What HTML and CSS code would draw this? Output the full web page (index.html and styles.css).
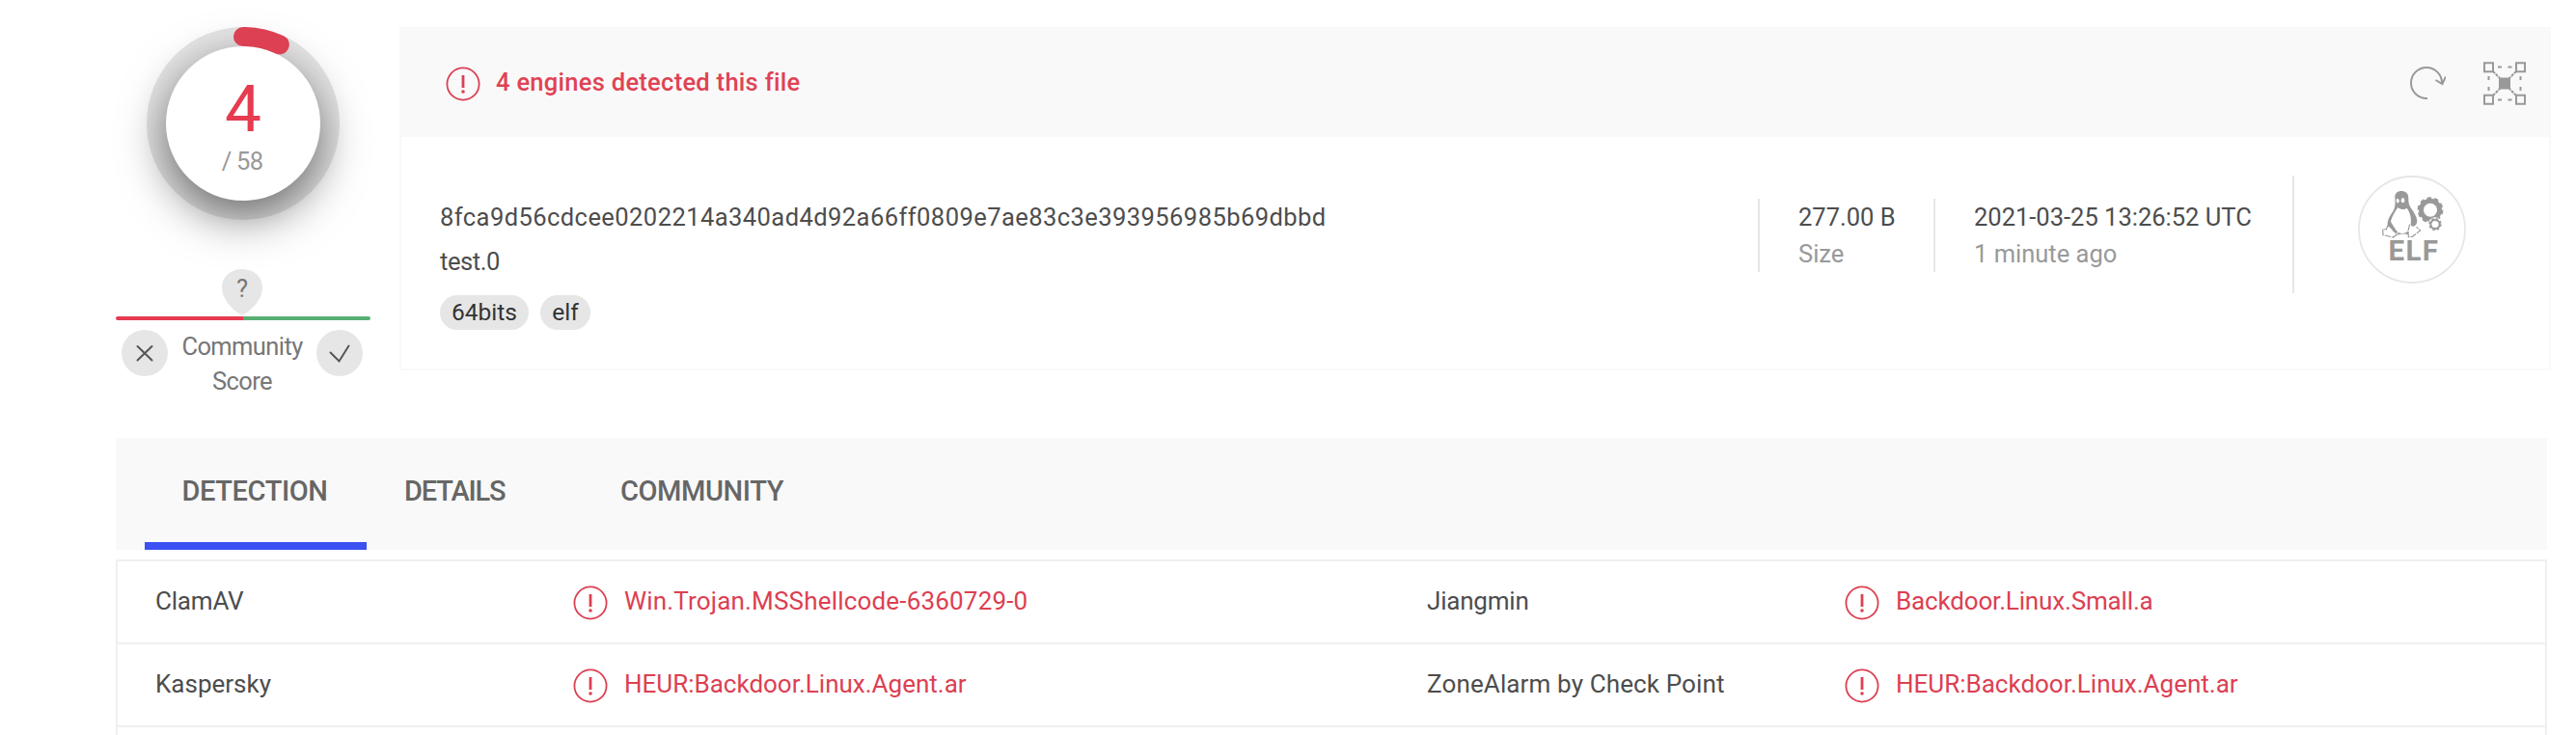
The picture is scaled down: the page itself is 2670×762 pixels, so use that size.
FILE: index.html
```html
<!DOCTYPE html>
<html lang="en">
<head>
<meta charset="utf-8">
<title>File report</title>
<link rel="stylesheet" href="styles.css">
</head>
<body>
<svg width="0" height="0" class="defs" aria-hidden="true">
  <symbol id="alert" viewBox="0 0 36 36">
    <circle cx="18" cy="18" r="16.6" fill="none" stroke="currentColor" stroke-width="1.8"/>
    <path d="M18 9v13" fill="none" stroke="currentColor" stroke-width="2.8"/>
    <circle cx="18" cy="26" r="1.8" fill="currentColor"/>
  </symbol>
</svg>

<div class="summary">
  <aside class="score">
    <div class="ring">
      <div class="ring-inner">
        <span class="positives">4</span>
        <span class="total">/ 58</span>
      </div>
      <svg class="ring-arc" viewBox="0 0 200 200" width="200" height="200">
        <path d="M100 10A90 90 0 0 1 137.8 18.3" fill="none" stroke="#dc4052" stroke-width="20" stroke-linecap="round"/>
      </svg>
    </div>
    <div class="pin">
      <svg viewBox="0 0 42 48" width="42" height="48"><path d="M21 0C33 0 42 8 42 19C42 31 32 42 21 48C10 42 0 31 0 19C0 8 9 0 21 0Z" fill="#e6e6e6"/></svg>
      <span class="pin-mark">?</span>
    </div>
    <div class="bar"></div>
    <div class="votes">
      <span class="vote"><svg viewBox="0 0 48 48" width="48" height="48"><path d="M16.5 17L31.5 31.5M31.5 17L16.5 31.5" /></svg></span>
      <span class="votes-label">Community<br>Score</span>
      <span class="vote"><svg viewBox="0 0 48 48" width="48" height="48"><path d="M14.5 23.5L23.5 32.5L33.5 16.5"/></svg></span>
    </div>
  </aside>

  <section class="card">
    <header class="card-head">
      <svg class="alert"><use href="#alert"/></svg>
      <span class="headline">4 engines detected this file</span>
      <span class="actions">
        <svg viewBox="0 0 40 40" width="40" height="40" class="line-icon"><path d="M21 36A16 16 0 1 1 36 20.5M29.5 17L36.5 21L40 13.5"/></svg>
        <svg viewBox="0 0 44 45" width="44" height="45" class="line-icon graph">
          <path d="M1 1.2h9v9h-9zM34 1.2h9v9h-9zM1 34.8h9v9h-9zM34 34.8h9v9h-9z"/>
          <path d="M15 5.5h4M25.500 5.500h4M15 39.500h4M25.500 39.500h4M5.500 15v4M5.500 26v4M38.500 15v4M38.500 26v4"/>
          <path d="M10 10l7 7M34 10l-7 7M10 35l7-7M34 35l-7-7" stroke-dasharray="3 1"/>
          <path d="M16 16.500h12v12h-12z" fill="currentColor" stroke="none"/>
        </svg>
      </span>
    </header>
    <div class="card-body">
      <div class="ident">
        <div class="hash">8fca9d56cdcee0202214a340ad4d92a66ff0809e7ae83c3e393956985b69dbbd</div>
        <div class="name">test.0</div>
        <div class="tags"><span class="tag">64bits</span><span class="tag elf">elf</span></div>
      </div>
      <div class="fact size"><div>277.00 B</div><div class="muted">Size</div></div>
      <div class="fact date"><div>2021-03-25 13:26:52 UTC</div><div class="muted">1 minute ago</div></div>
      <div class="type">
        <svg viewBox="0 0 112 112" width="112" height="112" fill="#999">
          <circle cx="56" cy="56" r="55" fill="none" stroke="#e6e6e6" stroke-width="1.8"/>
          <g transform="translate(16 8) scale(.3333)">
            <path fill-rule="evenodd" d="M67 43C67 30 76 24 88 24C101 24 109 33 109 46C109 58 110 67 116 76C126 90 135 103 136 118C136 126 131 133 124 134C119 134 115 131 116 126C119 112 115 92 104 77C98 83 85 83 76 75C68 88 58 102 54 118C56 125 60 130 64 136C69 143 72 149 77 154L65 153C57 143 51 136 44 132C42 115 52 101 61 87C69 76 68 59 67 43ZM72 49C70 55 72 61 75 62L80 58C82 53 78 46 72 49ZM87 50C84 57 88 59 94 61C99 56 98 47 92 46C89 46 88 47 87 50Z"/>
            <path d="M73 66L84 59L99 66L87 73Z"/>
            <path d="M77 152Q92 161 108 149L109 160Q94 155 74 161Z"/>
            <path d="M44 133L40 144L29 143L30 161L62 168L74 158L65 149L53 132ZM113 128L108 147L109 167L121 166L146 147L134 136" fill="none" stroke="#999" stroke-width="3.500" stroke-dasharray="20 3"/>
          </g>
          <circle cx="75" cy="35.700" r="9.500" fill="none" stroke="#999" stroke-width="5"/>
          <circle cx="75" cy="35.700" r="12" fill="none" stroke="#999" stroke-width="2.800" stroke-dasharray="4.400 3.140"/>
          <circle cx="80" cy="50.500" r="7.200" fill="#fff"/>
          <circle cx="80" cy="50.500" r="4.600" fill="none" stroke="#999" stroke-width="2"/>
          <circle cx="80" cy="50.500" r="5.900" fill="none" stroke="#999" stroke-width="1.500" stroke-dasharray="2.500 2.130"/>
          <text x="31.500" y="88" class="type-text">ELF</text>
        </svg>
      </div>
    </div>
  </section>
</div>

<nav class="tabs">
  <a class="tab active">DETECTION</a>
  <a class="tab details">DETAILS</a>
  <a class="tab community">COMMUNITY</a>
</nav>

<div class="results">
  <div class="row">
    <span class="engine clam">ClamAV</span>
    <span class="verdict"><svg class="alert"><use href="#alert"/></svg><span class="trojan">Win.Trojan.MSShellcode-6360729-0</span></span>
    <span class="engine jiang">Jiangmin</span>
    <span class="verdict"><svg class="alert"><use href="#alert"/></svg><span class="small">Backdoor.Linux.Small.a</span></span>
  </div>
  <div class="row">
    <span class="engine">Kaspersky</span>
    <span class="verdict"><svg class="alert"><use href="#alert"/></svg><span>HEUR:Backdoor.Linux.Agent.ar</span></span>
    <span class="engine zone">ZoneAlarm by Check Point</span>
    <span class="verdict"><svg class="alert"><use href="#alert"/></svg><span>HEUR:Backdoor.Linux.Agent.ar</span></span>
  </div>
</div>
</body>
</html>
```
FILE: styles.css
```css
* { box-sizing: border-box; }
html { overflow: hidden; }
body {
  margin: 0;
  height: 762px;
  padding: 28px 26px 0 120px;
  overflow: hidden;
  background: #fff;
  color: #4d4d4d;
  font: 400 25.5px/38px Roboto, "Liberation Sans", sans-serif;
}
svg { display: block; flex: none; }
.defs { position: absolute; }
.alert { width: 36px; height: 36px; margin-top: 3px; color: #dc4052; }

.summary { display: flex; align-items: flex-start; gap: 30px; height: 426px; }

/* score column */
.score { width: 264px; flex: none; }
.ring {
  position: relative;
  width: 200px;
  height: 200px;
  margin: 0 auto 51px;
  padding: 20px;
  border-radius: 50%;
  background: #e6e6e6;
}
.ring-inner {
  width: 160px;
  height: 160px;
  padding-top: 29px;
  border-radius: 50%;
  background: #fff;
  box-shadow: 0 16px 48px rgba(0, 0, 0, .55);
  text-align: center;
}
.ring-arc { position: absolute; left: 0; top: 0; }
.positives { display: block; font-size: 67.5px; line-height: 72px; color: #e63b50; }
.total { display: block; margin-left: -2px; line-height: 36px; letter-spacing: -.7px; color: #999; }
.pin { position: relative; width: 42px; height: 48px; margin: 0 auto 1px 110px; }
.pin-mark { position: absolute; inset: 0; line-height: 40px; text-align: center; color: #777; }
.bar {
  height: 4px;
  margin-bottom: 9px;
  border-radius: 2px;
  background: linear-gradient(90deg, #e63b50 50%, #56af73 50%);
}
.votes { display: flex; justify-content: space-between; padding: 0 8px 0 6px; }
.vote {
  width: 48px;
  height: 48px;
  margin-top: 1px;
  border-radius: 50%;
  background: #e6e6e6;
}
.vote path { fill: none; stroke: #555; stroke-width: 2; stroke-linecap: round; }
.votes-label { line-height: 36px; letter-spacing: -.6px; text-align: center; color: #777; }

/* file card */
.card { flex: 1; height: 356px; border: 2px solid #f9f9f9; border-top: 0; }
.card-head {
  display: flex;
  align-items: center;
  height: 114px;
  padding: 0 24px 0 46px;
  background: #f9f9f9;
}
.headline { margin-left: 16px; font-weight: 500; letter-spacing: .28px; color: #e04254; }
.actions { display: flex; align-items: center; gap: 39px; margin: 2px 0 0 auto; }
.line-icon { fill: none; stroke: #999; stroke-width: 2; color: #999; }
.card-body { display: flex; align-items: flex-start; padding-top: 64px; }
.ident { flex: 1; padding-left: 40px; }
.hash { letter-spacing: .44px; }
.name { margin-top: 9px; line-height: 36px; letter-spacing: -.42px; }
.tags { display: flex; gap: 12px; margin-top: 17px; }
.tag {
  width: 92px;
  height: 36px;
  border-radius: 18px;
  background: #e6e6e6;
  color: #333;
  font-size: 24.5px;
  line-height: 36px;
  text-align: center;
}
.tag.elf { width: 52px; }
.fact { height: 76px; padding-left: 40px; border-left: 2px solid #e6e6e6; white-space: nowrap; }
.fact.size { width: 182px; }
.fact.date { width: 372px; }
.muted { color: #999; }
.type {
  height: 122px;
  margin-top: -24px;
  padding: 0 86px 0 66px;
  border-left: 2px solid #e6e6e6;
}
.type-text { font-size: 29.5px; font-weight: 700; letter-spacing: 1.4px; }

/* tabs */
.tabs { display: flex; width: 2520px; height: 116px; padding-left: 30px; background: #f9f9f9; }
.tab {
  padding: 36px 40px 0;
  font-size: 29px;
  font-weight: 500;
  letter-spacing: -.4px;
  color: #666;
}
.tab.active { width: 230px; padding: 36px 2px 0 0; border-bottom: 8px solid #3b51f2; text-align: center; }
.tab.details { width: 223px; padding-left: 39px; letter-spacing: -1.17px; }

/* results */
.results { width: 2520px; margin-top: 10px; height: 182px; overflow: hidden; border: 2px solid #f0f0f0; border-bottom: 0; }
.row {
  display: grid;
  grid-template-columns: 433px 885px 433px 1fr;
  align-items: center;
  height: 86px;
  padding: 0 0 2px 39px;
  border-bottom: 2px solid #f0f0f0;
  font-size: 26px;
}
.verdict { display: flex; align-items: center; gap: 17px; color: #dc4052; }
.clam, .jiang { letter-spacing: -.2px; }
.zone { letter-spacing: .13px; }
.trojan { letter-spacing: .18px; }
.small { letter-spacing: -.16px; }
```
